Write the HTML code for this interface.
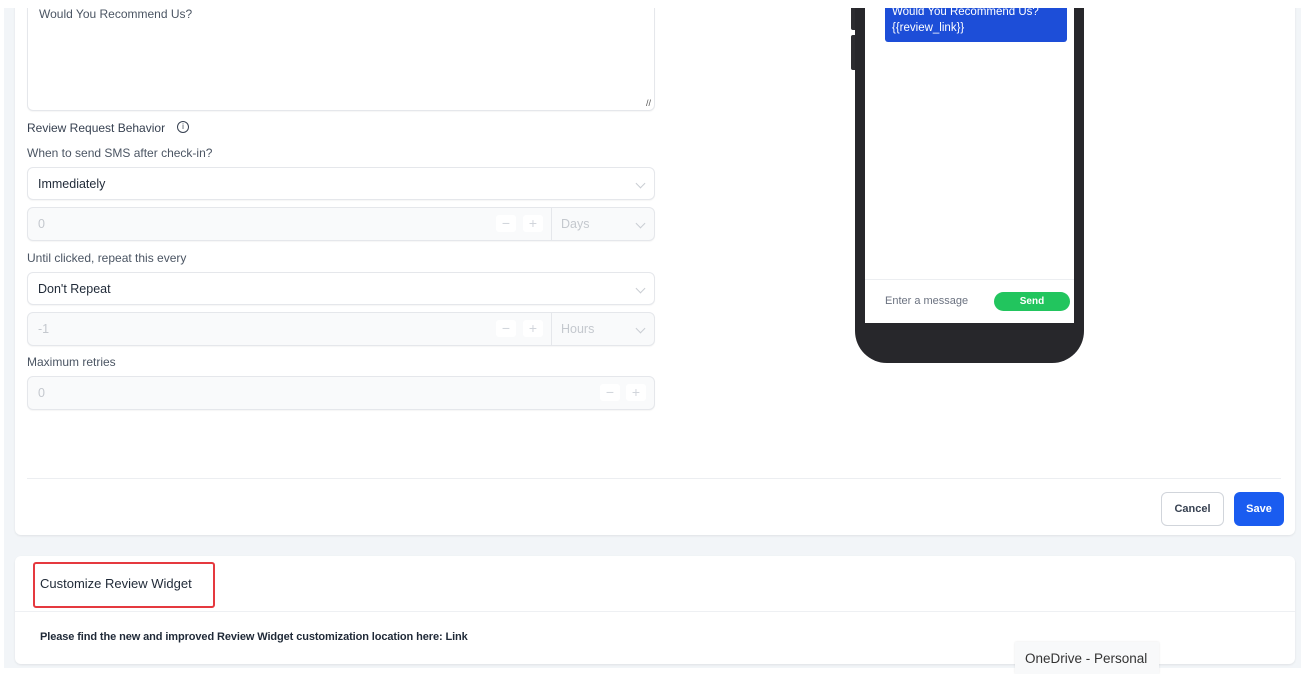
<!DOCTYPE html>
<html><head><style>
*{box-sizing:border-box;margin:0;padding:0}
body{width:1303px;height:674px;background:#fff;font-family:"Liberation Sans",sans-serif;position:relative;overflow:hidden}
.abs{position:absolute}
.bg{left:4px;top:0;width:1297px;height:668px;background:#f2f5f8}
.card{background:#fff;border-radius:6px;box-shadow:0 1px 2px rgba(0,0,0,.08)}
.lbl{font-size:12px;color:#4b5563}
.fld{border:1px solid #e5e7eb;border-radius:6px;background:#fff;box-shadow:0 1px 1px rgba(0,0,0,.04)}
.dis{background:#f9fafb}
.ft{font-size:12.5px;color:#1f2937;position:absolute;left:10px;top:9px}
.ph{color:#c4c8ce}
.chev{position:absolute;right:10px;top:12px;width:7px;height:7px;border-right:1px solid #c9cdd3;border-bottom:1px solid #c9cdd3;transform:rotate(45deg)}
.pm{position:absolute;top:7px;width:20px;height:17px;border-radius:3px;background:#fff;color:#d1d5db;font-size:14px;text-align:center;line-height:16px}
</style></head><body>
<div class="abs bg"></div>
<div class="abs card" style="left:15px;top:-6px;width:1280px;height:541px"></div>
<div class="abs card" style="left:15px;top:556px;width:1280px;height:108px"></div>
<div class="abs" style="left:15px;top:611px;width:1280px;height:1px;background:#eef0f3"></div>
<div class="abs" style="left:27px;top:478px;width:1254px;height:1px;background:#eceef1"></div>

<!-- textarea -->
<div class="abs fld" style="left:27px;top:-4px;width:628px;height:115px"><span class="abs" style="left:11px;top:10px;font-size:12px;color:#4b5563">Would You Recommend Us?</span>
<span class="abs" style="right:3px;bottom:2px;font-size:9px;color:#555">//</span></div>

<div class="abs lbl" style="left:27px;top:121px;color:#374151">Review Request Behavior</div>
<div class="abs" style="left:177px;top:121px;width:12px;height:12px;border:1px solid #374151;border-radius:50%;font-size:8px;text-align:center;line-height:10px;color:#374151">i</div>
<div class="abs lbl" style="left:27px;top:146px">When to send SMS after check-in?</div>
<div class="abs fld" style="left:27px;top:167px;width:628px;height:33px"><span class="ft">Immediately</span><i class="chev"></i></div>
<div class="abs fld dis" style="left:27px;top:207px;width:628px;height:34px"><span class="ft ph">0</span><span class="pm" style="left:468px">−</span><span class="pm" style="left:495px">+</span><div class="abs" style="left:523px;top:0;width:1px;height:32px;background:#e5e7eb"></div><span class="ft ph" style="left:533px">Days</span><i class="chev"></i></div>
<div class="abs lbl" style="left:27px;top:251px">Until clicked, repeat this every</div>
<div class="abs fld" style="left:27px;top:272px;width:628px;height:33px"><span class="ft">Don't Repeat</span><i class="chev"></i></div>
<div class="abs fld dis" style="left:27px;top:312px;width:628px;height:34px"><span class="ft ph">-1</span><span class="pm" style="left:468px">−</span><span class="pm" style="left:495px">+</span><div class="abs" style="left:523px;top:0;width:1px;height:32px;background:#e5e7eb"></div><span class="ft ph" style="left:533px">Hours</span><i class="chev"></i></div>
<div class="abs lbl" style="left:27px;top:355px">Maximum retries</div>
<div class="abs fld dis" style="left:27px;top:376px;width:628px;height:34px"><span class="ft ph">0</span><span class="pm" style="left:572px">−</span><span class="pm" style="left:598px">+</span></div>

<!-- phone -->
<div class="abs" style="left:851px;top:6px;width:6px;height:24px;background:#2c2c30;border-radius:2px"></div>
<div class="abs" style="left:851px;top:35px;width:6px;height:35px;background:#2c2c30;border-radius:2px"></div>
<div class="abs" style="left:855px;top:-30px;width:229px;height:393px;background:#27272b;border-radius:0 0 32px 32px"></div>
<div class="abs" style="left:865px;top:-10px;width:209px;height:333px;background:#fff"></div>
<div class="abs" style="left:885px;top:-10px;width:182px;height:52px;background:#1d4ed8;border-radius:3px;color:#fff;font-size:11.5px;padding:14px 0 0 7px;line-height:16px">Would You Recommend Us?<br>{{review_link}}</div>
<div class="abs" style="left:865px;top:279px;width:209px;height:1px;background:#eceef1"></div>
<div class="abs" style="left:885px;top:295px;font-size:11px;color:#6b7280">Enter a message</div>
<div class="abs" style="left:994px;top:292px;width:76px;height:19px;background:#22c55e;border-radius:10px;color:#fff;font-size:10px;font-weight:bold;text-align:center;line-height:19px">Send</div>

<div class="abs" style="left:1161px;top:492px;width:63px;height:34px;border:1px solid #d1d5db;border-radius:6px;font-size:11px;font-weight:bold;color:#374151;text-align:center;line-height:32px">Cancel</div>
<div class="abs" style="left:1234px;top:492px;width:50px;height:34px;background:#1a5cf0;border-radius:6px;font-size:11px;font-weight:bold;color:#fff;text-align:center;line-height:34px">Save</div>

<div class="abs" style="left:33px;top:562px;width:182px;height:46px;border:2px solid #e5393f;border-radius:3px"></div>
<div class="abs" style="left:40px;top:576px;font-size:13px;color:#1f2937">Customize Review Widget</div>
<div class="abs" style="left:40px;top:631px;font-size:11px;color:#1f2937;font-weight:bold;letter-spacing:-.1px">Please find the new and improved Review Widget customization location here: Link</div>

<div class="abs" style="left:1015px;top:642px;width:144px;height:32px;background:#f8f9fa;box-shadow:0 0 2px rgba(0,0,0,.1);font-size:13.5px;color:#333;padding:9px 0 0 10px">OneDrive - Personal</div>
<div class="abs" style="left:0;top:0;width:1303px;height:8px;background:#fff"></div>
</body></html>
